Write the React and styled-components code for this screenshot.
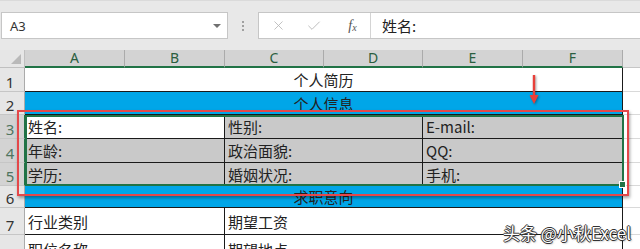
import React from "react";
import styled, { createGlobalStyle } from "styled-components";
import { X, Check } from "lucide-react";

const GlobalStyle = createGlobalStyle`
  html, body {
    margin: 0;
    padding: 0;
    background: #ffffff;
    overflow: hidden;
  }
  body {
    font-family: "Noto Sans CJK SC", "Noto Sans", sans-serif;
  }
`;

const COLS = "25px 100px 100px 99px 99px 100px 100px 1fr";
const ROWS = "18px 24px 23px 24px 24px 23px 22px 27px 30px";

const rows = [
  { n: 1, cells: [{ text: "个人简历", span: 6, center: true }] },
  { n: 2, cells: [{ text: "个人信息", span: 6, center: true, bg: "#00a6e8" }] },
  {
    n: 3,
    sel: true,
    cells: [
      { text: "姓名:", span: 2, bg: "#ffffff" },
      { text: "性别:", span: 2, bg: "#c9c9c9" },
      { text: "E-mail:", span: 2, bg: "#c9c9c9" },
    ],
  },
  {
    n: 4,
    sel: true,
    cells: [
      { text: "年龄:", span: 2, bg: "#c9c9c9" },
      { text: "政治面貌:", span: 2, bg: "#c9c9c9" },
      { text: "QQ:", span: 2, bg: "#c9c9c9" },
    ],
  },
  {
    n: 5,
    sel: true,
    cells: [
      { text: "学历:", span: 2, bg: "#c9c9c9" },
      { text: "婚姻状况:", span: 2, bg: "#c9c9c9" },
      { text: "手机:", span: 2, bg: "#c9c9c9" },
    ],
  },
  { n: 6, cells: [{ text: "求职意向", span: 6, center: true, bg: "#00a6e8" }] },
  {
    n: 7,
    cells: [
      { text: "行业类别", span: 2 },
      { text: "期望工资", span: 4 },
    ],
  },
  {
    n: 8,
    cells: [
      { text: "职位名称", span: 2 },
      { text: "期望地点", span: 4 },
    ],
  },
];

const letters = ["A", "B", "C", "D", "E", "F"];

export default function App() {
  return (
    <>
      <GlobalStyle />
      <Page>
        <FormulaBar>
          <NameBox>
            <NameText>A3</NameText>
            <DropArrow />
          </NameBox>
          <Grip>
            <Dot />
            <Dot />
            <Dot />
          </Grip>
          <FormulaBox>
            <ActionIcon $w={38}>
              <X size={15} strokeWidth={1.3} color="#b4b4b4" />
            </ActionIcon>
            <ActionIcon $w={34}>
              <Check size={16} strokeWidth={1.3} color="#b4b4b4" />
            </ActionIcon>
            <FxIcon>
              <i>f</i>
              <Sub>x</Sub>
            </FxIcon>
            <FormulaText>姓名:</FormulaText>
          </FormulaBox>
        </FormulaBar>

        <Sheet>
          <Corner>
            <CornerTriangle />
          </Corner>
          {letters.map((l) => (
            <ColHead key={l}>{l}</ColHead>
          ))}
          <ColHeadRest />

          {rows.map((r) => (
            <React.Fragment key={r.n}>
              <RowHead $sel={r.sel}>{r.n}</RowHead>
              {r.cells.map((c, i) => (
                <Cell key={i} $span={c.span} $bg={c.bg} $center={c.center}>
                  {c.text}
                </Cell>
              ))}
              <RestCell />
            </React.Fragment>
          ))}

          <Selection>
            <FillHandle />
          </Selection>
          <Highlight />
          <Arrow width="12" height="32" viewBox="0 0 12 32">
            <line x1="6" y1="1" x2="6" y2="24" stroke="#e8403a" strokeWidth="2.4" />
            <path d="M1.5 21 L6 30 L10.5 21 Z" fill="#e8403a" />
          </Arrow>
          <Watermark>头条 @小秋Excel</Watermark>
        </Sheet>
      </Page>
    </>
  );
}

const Page = styled.div`
  width: 640px;
  height: 249px;
  overflow: hidden;
  display: flex;
  flex-direction: column;
`;

const FormulaBar = styled.div`
  height: 50px;
  flex: none;
  display: flex;
  align-items: center;
  background: #e8e8e8;
  border-top: 1px solid #dadada;
  box-sizing: border-box;
  padding: 0 0 0 1px;
`;

const NameBox = styled.div`
  width: 227px;
  height: 27px;
  box-sizing: border-box;
  background: #ffffff;
  border: 1px solid #c6c6c6;
  display: flex;
  align-items: center;
  justify-content: space-between;
  padding: 0 6px 0 8px;
`;

const NameText = styled.span`
  font-family: "Noto Sans", sans-serif;
  font-size: 13px;
  color: #333333;
`;

const DropArrow = styled.span`
  width: 0;
  height: 0;
  border-left: 4px solid transparent;
  border-right: 4px solid transparent;
  border-top: 4px solid #707070;
`;

const Grip = styled.div`
  width: 30px;
  display: flex;
  flex-direction: column;
  align-items: center;
  gap: 2px;
`;

const Dot = styled.span`
  width: 2px;
  height: 2px;
  background: #a0a0a0;
`;

const FormulaBox = styled.div`
  flex: 1;
  height: 27px;
  box-sizing: border-box;
  background: #ffffff;
  border: 1px solid #c6c6c6;
  border-right: none;
  display: flex;
  align-items: center;
`;

const ActionIcon = styled.span`
  width: ${(p) => p.$w}px;
  display: flex;
  justify-content: center;
`;

const FxIcon = styled.span`
  width: 40px;
  height: 100%;
  box-sizing: border-box;
  border-right: 1px solid #d4d4d4;
  display: flex;
  align-items: center;
  justify-content: center;
  font-family: "Liberation Serif", serif;
  font-size: 14px;
  color: #555555;
  padding-left: 4px;
`;

const Sub = styled.i`
  font-size: 10px;
  margin-top: 3px;
`;

const FormulaText = styled.span`
  margin-left: 11px;
  font-size: 15px;
  color: #222222;
`;

const Sheet = styled.div`
  position: relative;
  flex: 1;
  display: grid;
  grid-template-columns: ${COLS};
  grid-template-rows: ${ROWS};
  font-size: 15px;
  color: #222222;
`;

const Corner = styled.div`
  background: #e6e6e6;
  border-right: 1px solid #c0c0c0;
  border-bottom: 1px solid #c0c0c0;
  position: relative;
`;

const CornerTriangle = styled.span`
  position: absolute;
  right: 3px;
  bottom: 3px;
  width: 0;
  height: 0;
  border-left: 10px solid transparent;
  border-bottom: 10px solid #b9b9b9;
`;

const ColHead = styled.div`
  background: #d3d3d3;
  border-right: 1px solid #ababab;
  border-bottom: 2px solid #217346;
  display: flex;
  align-items: center;
  justify-content: center;
  font-family: "Noto Sans", sans-serif;
  font-size: 14px;
  color: #2a5e40;
  line-height: 1;
`;

const ColHeadRest = styled.div`
  background: #e6e6e6;
  border-bottom: 1px solid #c6c6c6;
`;

const RowHead = styled.div`
  background: ${(p) => (p.$sel ? "#d3d3d3" : "#e6e6e6")};
  border-bottom: 1px solid #c6c6c6;
  border-right: 1px solid ${(p) => (p.$sel ? "#217346" : "#ababab")};
  display: flex;
  align-items: flex-end;
  justify-content: center;
  padding-right: 4px;
  font-family: "Noto Sans", sans-serif;
  font-size: 15px;
  line-height: 1;
  padding-bottom: 1px;
  color: ${(p) => (p.$sel ? "#4f7560" : "#333333")};
`;

const Cell = styled.div`
  grid-column: span ${(p) => p.$span};
  background: ${(p) => p.$bg || "#ffffff"};
  border-right: 1px solid #1a1a1a;
  border-bottom: 1px solid #1a1a1a;
  display: flex;
  align-items: center;
  justify-content: ${(p) => (p.$center ? "center" : "flex-start")};
  padding-left: ${(p) => (p.$center ? "0" : "3px")};
  white-space: nowrap;
  overflow: hidden;
  line-height: 1;
`;

const RestCell = styled.div`
  background: #ffffff;
  border-bottom: 1px solid #d9d9d9;
`;

const Selection = styled.div`
  position: absolute;
  left: 25px;
  top: 65px;
  width: 599px;
  height: 71px;
  box-sizing: border-box;
  border: 2px solid #217346;
  pointer-events: none;
`;

const FillHandle = styled.span`
  position: absolute;
  right: -4px;
  bottom: -4px;
  width: 5px;
  height: 5px;
  background: #217346;
  border: 1px solid #ffffff;
`;

const Highlight = styled.div`
  position: absolute;
  left: 17px;
  top: 60px;
  width: 612px;
  height: 86px;
  box-sizing: border-box;
  border: 2px solid #e4484a;
  box-shadow: 1px 2px 3px rgba(0, 0, 0, 0.35);
  pointer-events: none;
`;

const Arrow = styled.svg`
  position: absolute;
  left: 528px;
  top: 24px;
  filter: drop-shadow(1px 1px 1px rgba(0, 0, 0, 0.35));
`;

const Watermark = styled.div`
  position: absolute;
  left: 503px;
  top: 170px;
  font-size: 17px;
  color: #ffffff;
  white-space: nowrap;
  text-shadow: -1px 0 #333, 1px 0 #333, 0 -1px #333, 0 1px #333,
    1px 1px 2px rgba(0, 0, 0, 0.5);
`;
